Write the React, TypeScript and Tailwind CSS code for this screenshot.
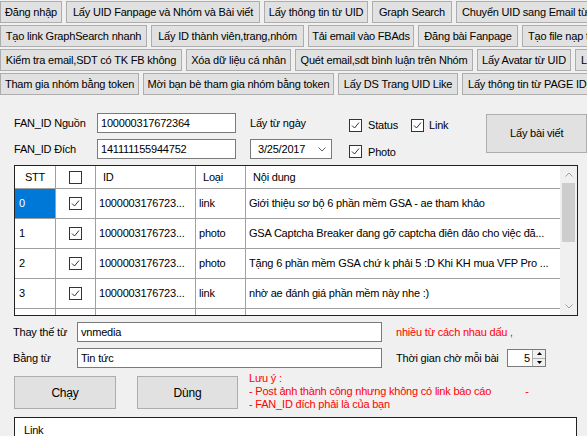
import React from 'react';

const ROWS = [
  [
    { label: 'Đăng nhập', w: 'w-[62px]' },
    { label: 'Lấy UID Fanpage và Nhóm và Bài viết', w: 'w-[194px]' },
    { label: 'Lấy thông tin từ UID', w: 'w-[104px]' },
    { label: 'Graph Search', w: 'w-[80px]' },
    { label: 'Chuyển UID sang Email từ UID', w: 'w-auto' },
  ],
  [
    { label: 'Tạo link GraphSearch nhanh', w: 'w-[147px]' },
    { label: 'Lấy ID thành viên,trang,nhóm', w: 'w-[153px]' },
    { label: 'Tải email vào FBAds', w: 'w-[106px]' },
    { label: 'Đăng bài Fanpage', w: 'w-[100px]' },
    { label: 'Tạo file nạp tiền', w: 'w-auto' },
  ],
  [
    { label: 'Kiểm tra email,SDT có TK FB không', w: 'w-[182px]' },
    { label: 'Xóa dữ liệu cá nhân', w: 'w-[105px]' },
    { label: 'Quét email,sdt bình luận trên Nhóm', w: 'w-[178px]' },
    { label: 'Lấy Avatar từ UID', w: 'w-[94px]' },
    { label: 'Lấy Email', w: 'w-auto' },
  ],
  [
    { label: 'Tham gia nhóm bằng token', w: 'w-[139px]' },
    { label: 'Mời bạn bè tham gia nhóm bằng token', w: 'w-[191px]' },
    { label: 'Lấy DS Trang UID Like', w: 'w-[120px]' },
    { label: 'Lấy thông tin từ PAGE ID', w: 'w-auto' },
  ],
];

const POSTS = [
  { stt: '0', type: 'link', text: 'Giới thiệu sơ bộ 6 phần mềm GSA - ae tham khảo' },
  { stt: '1', type: 'photo', text: 'GSA Captcha Breaker đang gỡ captcha điên đảo cho việc đă...' },
  { stt: '2', type: 'photo', text: 'Tặng 6 phần mềm GSA chứ k phải 5 :D Khi KH mua VFP Pro ...' },
  { stt: '3', type: 'link', text: 'nhờ ae đánh giá phần mềm này nhe :)' },
];

function Check({ checked = true }: { checked?: boolean }) {
  return (
    <span className="inline-flex w-[13px] h-[13px] shrink-0 bg-white border border-[#333] items-center justify-center">
      {checked && (
        <svg width="11" height="11" viewBox="0 0 11 11">
          <path d="M2 5.5 L4.5 8 L9 2.5" fill="none" stroke="#333" strokeWidth="1" />
        </svg>
      )}
    </span>
  );
}

function Chevron({ up = false, color = '#606060' }: { up?: boolean; color?: string }) {
  return (
    <svg width="8" height="5" viewBox="0 0 8 5">
      <path d={up ? 'M0.5 4.5 L4 1 L7.5 4.5' : 'M0.5 0.5 L4 4 L7.5 0.5'} fill="none" stroke={color} strokeWidth="1" />
    </svg>
  );
}

const btn = 'bg-[#e1e1e1] border border-[#adadad] text-black';
const box = 'bg-white border border-[#7a7a7a] h-[20px] flex items-center px-[3px] shrink-0';
const cell = 'border-r border-[#a0a0a0]';

export default function App() {
  return (
    <div className="w-[587px] h-[436px] overflow-hidden bg-[#f0f0f0] text-[11px] text-black font-['Liberation_Sans',Arial,sans-serif] tracking-[-0.2px]">
      <div className="flex flex-col gap-[2px] pt-[1px]">
        {ROWS.map((row, i) => (
          <div key={i} className="flex gap-[4px]">
            {row.map(b => (
              <div key={b.label} className={`${b.w} ${btn} shrink-0 h-[22px] px-[5px] flex items-center justify-center whitespace-nowrap`}>
                {b.label}
              </div>
            ))}
          </div>
        ))}
      </div>

      <div className="flex pl-[14px] mt-[18px] h-[46px]">
        <div className="flex flex-col gap-[6px]">
          <div className="flex items-center">
            <span className="w-[83px] shrink-0 whitespace-nowrap">FAN_ID Nguồn</span>
            <div className={`${box} w-[139px]`}>100000317672364</div>
          </div>
          <div className="flex items-center">
            <span className="w-[83px] shrink-0 whitespace-nowrap">FAN_ID Đích</span>
            <div className={`${box} w-[139px]`}>141111155944752</div>
          </div>
        </div>
        <div className="flex flex-col gap-[6px] ml-[14px]">
          <div className="h-[20px] flex items-center">Lấy từ ngày</div>
          <div className={`${box} w-[82px] justify-between pl-[7px] pr-[5px]`}>
            <span>3/25/2017</span>
            <Chevron />
          </div>
        </div>
        <div className="flex flex-col ml-[17px] pt-[4px] gap-[10px]">
          <div className="flex items-center">
            <Check />
            <span className="ml-[6px] w-[43px]">Status</span>
            <Check />
            <span className="ml-[5px]">Link</span>
          </div>
          <div className="flex items-center">
            <Check />
            <span className="ml-[6px]">Photo</span>
          </div>
        </div>
        <div className={`${btn} ml-[38px] mt-[1px] w-[102px] h-[39px] flex items-center justify-center`}>Lấy bài viết</div>
      </div>

      <div className="ml-[14px] mt-[6px] w-[564px] h-[151px] border border-[#222] bg-white flex overflow-hidden">
        <div className="flex-1 flex flex-col">
          <div className="flex h-[23px] border-b border-[#a0a0a0] shrink-0">
            <div className={`w-[41px] ${cell} flex items-center justify-center`}>STT</div>
            <div className={`w-[40px] ${cell} flex items-center justify-center`}><Check checked={false} /></div>
            <div className={`w-[100px] ${cell} flex items-center pl-[7px]`}>ID</div>
            <div className={`w-[50px] ${cell} flex items-center pl-[7px]`}>Loại</div>
            <div className="flex-1 flex items-center pl-[7px]">Nội dung</div>
          </div>
          {POSTS.map((p, i) => (
            <div key={p.stt} className="flex h-[30px] border-b border-[#a0a0a0] shrink-0">
              <div className={`w-[41px] ${cell} flex items-center pl-[4px] ${i === 0 ? 'bg-[#0078d7] text-white' : ''}`}>{p.stt}</div>
              <div className={`w-[40px] ${cell} flex items-center justify-center`}><Check /></div>
              <div className={`w-[100px] ${cell} flex items-center pl-[3px] whitespace-nowrap`}>1000003176723...</div>
              <div className={`w-[50px] ${cell} flex items-center pl-[3px]`}>{p.type}</div>
              <div className="flex-1 flex items-center pl-[3px] whitespace-nowrap overflow-hidden">{p.text}</div>
            </div>
          ))}
          {/* next row, cut off by the grid's bottom edge */}
          <div className="flex h-[30px] shrink-0">
            <div className={`w-[41px] ${cell}`} />
            <div className={`w-[40px] ${cell}`} />
            <div className={`w-[100px] ${cell}`} />
            <div className={`w-[50px] ${cell}`} />
            <div className="flex-1" />
          </div>
        </div>
        <div className="w-[17px] bg-[#f0f0f0] flex flex-col items-center shrink-0">
          <div className="h-[17px] flex items-center justify-center"><Chevron up color="#a0a0a0" /></div>
          <div className="w-[13px] h-[59px] bg-[#cdcdcd]" />
          <div className="flex-1" />
          <div className="h-[17px] flex items-center justify-center"><Chevron color="#a0a0a0" /></div>
        </div>
      </div>

      <div className="flex items-center pl-[13px] mt-[6px]">
        <span className="w-[64px] shrink-0 whitespace-nowrap">Thay thế từ</span>
        <div className={`${box} w-[305px]`}>vnmedia</div>
        <span className="ml-[14px] text-[#ff0000] whitespace-nowrap">nhiều từ cách nhau dấu ,</span>
      </div>
      <div className="flex items-center pl-[13px] mt-[6px]">
        <span className="w-[64px] shrink-0 whitespace-nowrap">Bằng từ</span>
        <div className={`${box} w-[305px]`}>Tin tức</div>
        <span className="ml-[14px] w-[111px] shrink-0 whitespace-nowrap">Thời gian chờ mỗi bài</span>
        <div className="bg-white border border-[#7a7a7a] w-[39px] h-[18px] flex items-center shrink-0">
          <span className="flex-1 text-right pr-[2px]">5</span>
          <div className="w-[13px] h-full flex flex-col border-l border-[#adadad] bg-[#f0f0f0]">
            <div className="flex-1 flex items-center justify-center border-b border-[#adadad]">
              <svg width="5" height="3" viewBox="0 0 5 3"><path d="M0 3 L2.5 0 L5 3 Z" fill="#000" /></svg>
            </div>
            <div className="flex-1 flex items-center justify-center">
              <svg width="5" height="3" viewBox="0 0 5 3"><path d="M0 0 L2.5 3 L5 0 Z" fill="#000" /></svg>
            </div>
          </div>
        </div>
      </div>

      <div className="flex items-start pl-[14px] mt-[8px] h-[33px]">
        <div className={`${btn} w-[102px] h-[33px] flex items-center justify-center text-[12px]`}>Chạy</div>
        <div className={`${btn} ml-[21px] w-[101px] h-[33px] flex items-center justify-center text-[12px]`}>Dùng</div>
        <div className="ml-[11px] -mt-[4px] text-[#ff0000] leading-[13px] whitespace-nowrap">
          <div>Lưu ý :</div>
          <div>- Post ảnh thành công nhưng không có link báo cáo<span className="ml-[34px]">-</span></div>
          <div>- FAN_ID đích phải là của bạn</div>
        </div>
      </div>

      <div className="ml-[14px] mt-[8px] w-[563px] h-[40px] border border-[#222] bg-white pl-[9px] pt-[4px]">
        Link
      </div>
    </div>
  );
}
